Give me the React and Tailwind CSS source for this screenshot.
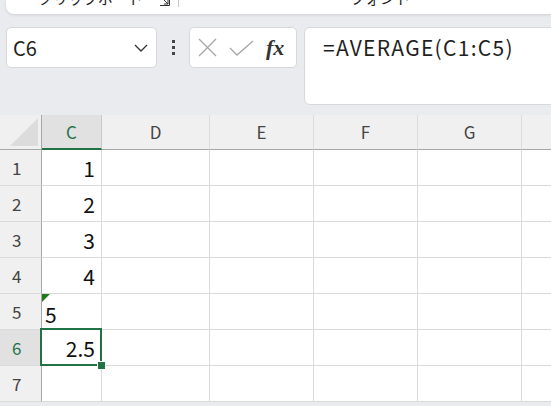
import React from 'react';

const cols = [
  { key: 'C', width: 60 },
  { key: 'D', width: 108 },
  { key: 'E', width: 104 },
  { key: 'F', width: 104 },
  { key: 'G', width: 104 },
  { key: 'H', width: 104, hidden: true },
];

const rows = [
  { n: 1, c: '1', align: 'right' },
  { n: 2, c: '2', align: 'right' },
  { n: 3, c: '3', align: 'right' },
  { n: 4, c: '4', align: 'right' },
  { n: 5, c: '5', align: 'left', flagged: true },
  { n: 6, c: '2.5', align: 'right', active: true },
  { n: 7, c: '', align: 'right' },
];

const Ribbon = () => (
  <div className="h-[14px] pl-[6px]">
    <div className="relative h-full rounded-bl-[8px] bg-white shadow-[0_1px_3px_rgba(0,0,0,0.12)] overflow-hidden">
      <span className="absolute left-[32px] top-[-11px] text-[15px] leading-[18px] text-[#222]">
        クリップボード
      </span>
      <svg className="absolute left-[154px] top-[-4px]" width="10" height="10" viewBox="0 0 10 10">
        <path d="M1 1 L8 8 M4 8 H8 V4" fill="none" stroke="#333" strokeWidth="1" />
        <path d="M9.5 0 V9.5 H0" fill="none" stroke="#333" strokeWidth="1" />
      </svg>
      <div className="absolute left-[172px] top-0 h-[7px] w-px bg-[#c8c8c8]" />
      <span className="absolute left-[344px] top-[-11px] text-[15px] leading-[18px] text-[#222]">
        フォント
      </span>
    </div>
  </div>
);

const FormulaRow = () => (
  <div className="flex items-start pt-[13px] h-[101px]">
    <div className="ml-[6px] flex h-[41px] w-[151px] items-center justify-between rounded-[5px] border border-[#d6d8dc] bg-white pl-[6px] pr-[8px]">
      <span className="text-[20px] text-[#1f1f1f]">C6</span>
      <svg width="14" height="8" viewBox="0 0 14 8">
        <path d="M1 1 L7 7 L13 1" fill="none" stroke="#333" strokeWidth="1.3" />
      </svg>
    </div>
    <div className="flex h-[41px] w-[32px] flex-col items-center justify-center gap-[3px]">
      <span className="h-[3px] w-[3px] bg-[#444]" />
      <span className="h-[3px] w-[3px] bg-[#444]" />
      <span className="h-[3px] w-[3px] bg-[#444]" />
    </div>
    <div className="flex h-[41px] w-[108px] items-center gap-[12px] rounded-[5px] border border-[#d6d8dc] bg-white pl-[8px]">
      <svg width="19" height="19" viewBox="0 0 19 19">
        <path d="M1 1 L18 18 M18 1 L1 18" fill="none" stroke="#a6a6a6" strokeWidth="1.3" />
      </svg>
      <svg width="25" height="16" viewBox="0 0 25 16">
        <path d="M1 8 L8 15 L24 1" fill="none" stroke="#a6a6a6" strokeWidth="1.3" />
      </svg>
      <span className="text-[22px] italic font-bold text-[#333] font-['Liberation_Serif',serif] leading-none">
        fx
      </span>
    </div>
    <div className="ml-[7px] h-[78px] flex-1 -mr-[10px] rounded-[6px] border border-[#d6d8dc] bg-white pl-[18px] pt-[4px]">
      <span className="text-[21px] tracking-[1.3px] text-[#1f1f1f]">=AVERAGE(C1:C5)</span>
    </div>
  </div>
);

const HeaderRow = () => (
  <div className="flex h-[35px] bg-[#f0f0f0]">
    <div className="relative w-[42px] shrink-0 border-r border-b border-[#a8a8a8]">
      <svg className="absolute left-[10px] top-[3px]" width="29" height="29" viewBox="0 0 29 29">
        <path d="M28 0 V28 H0 Z" fill="#dcdcdc" />
      </svg>
    </div>
    {cols.map((col) => {
      const sel = col.key === 'C';
      return (
        <div
          key={col.key}
          style={{ width: col.width }}
          className={`shrink-0 flex items-center justify-center border-r text-[17px] ${
            sel
              ? 'bg-[#e1e1e1] border-b-2 border-b-[#217346] border-r-[#c8c8c8] text-[#217346]'
              : 'border-b border-b-[#a8a8a8] border-r-[#dcdcdc] text-[#444]'
          }`}
        >
          {col.hidden ? '' : col.key}
        </div>
      );
    })}
  </div>
);

const BodyRow = ({ row }) => (
  <div className="flex h-[36px]">
    <div
      className={`flex w-[42px] shrink-0 items-center pl-[12px] border-r border-r-[#a8a8a8] border-b border-b-[#dadada] text-[17px] ${
        row.active ? 'bg-[#e1e1e1] text-[#217346]' : 'bg-[#f0f0f0] text-[#444]'
      }`}
    >
      {row.n}
    </div>
    {cols.map((col) => {
      const isC = col.key === 'C';
      return (
        <div
          key={col.key}
          style={{ width: col.width }}
          className={`relative shrink-0 flex items-center border-r border-b border-[#dadada] bg-white text-[21px] text-[#111] ${
            isC && row.align === 'left' ? 'justify-start pl-[3px] pt-[6px]' : 'justify-end pr-[6px] pt-[2px]'
          }`}
        >
          {isC && row.flagged && (
            <svg className="absolute left-0 top-0" width="8" height="8" viewBox="0 0 8 8">
              <path d="M0 0 H8 L0 8 Z" fill="#1e7a1e" />
            </svg>
          )}
          {isC ? row.c : ''}
          {isC && row.active && (
            <>
              <div className="absolute -left-[2px] -top-[2px] h-[38px] w-[62px] border-2 border-[#217346]" />
              <div className="absolute -right-[4px] -bottom-[4px] z-10 h-[7px] w-[7px] bg-[#217346] ring-1 ring-white" />
            </>
          )}
        </div>
      );
    })}
  </div>
);

export default function App() {
  return (
    <div className="h-[406px] w-[551px] overflow-hidden bg-[#e9ebee] font-['Noto_Sans_CJK_JP','Noto_Sans',sans-serif]">
      <Ribbon />
      <FormulaRow />
      <div className="bg-white">
        <HeaderRow />
        {rows.map((row) => (
          <BodyRow key={row.n} row={row} />
        ))}
      </div>
    </div>
  );
}
